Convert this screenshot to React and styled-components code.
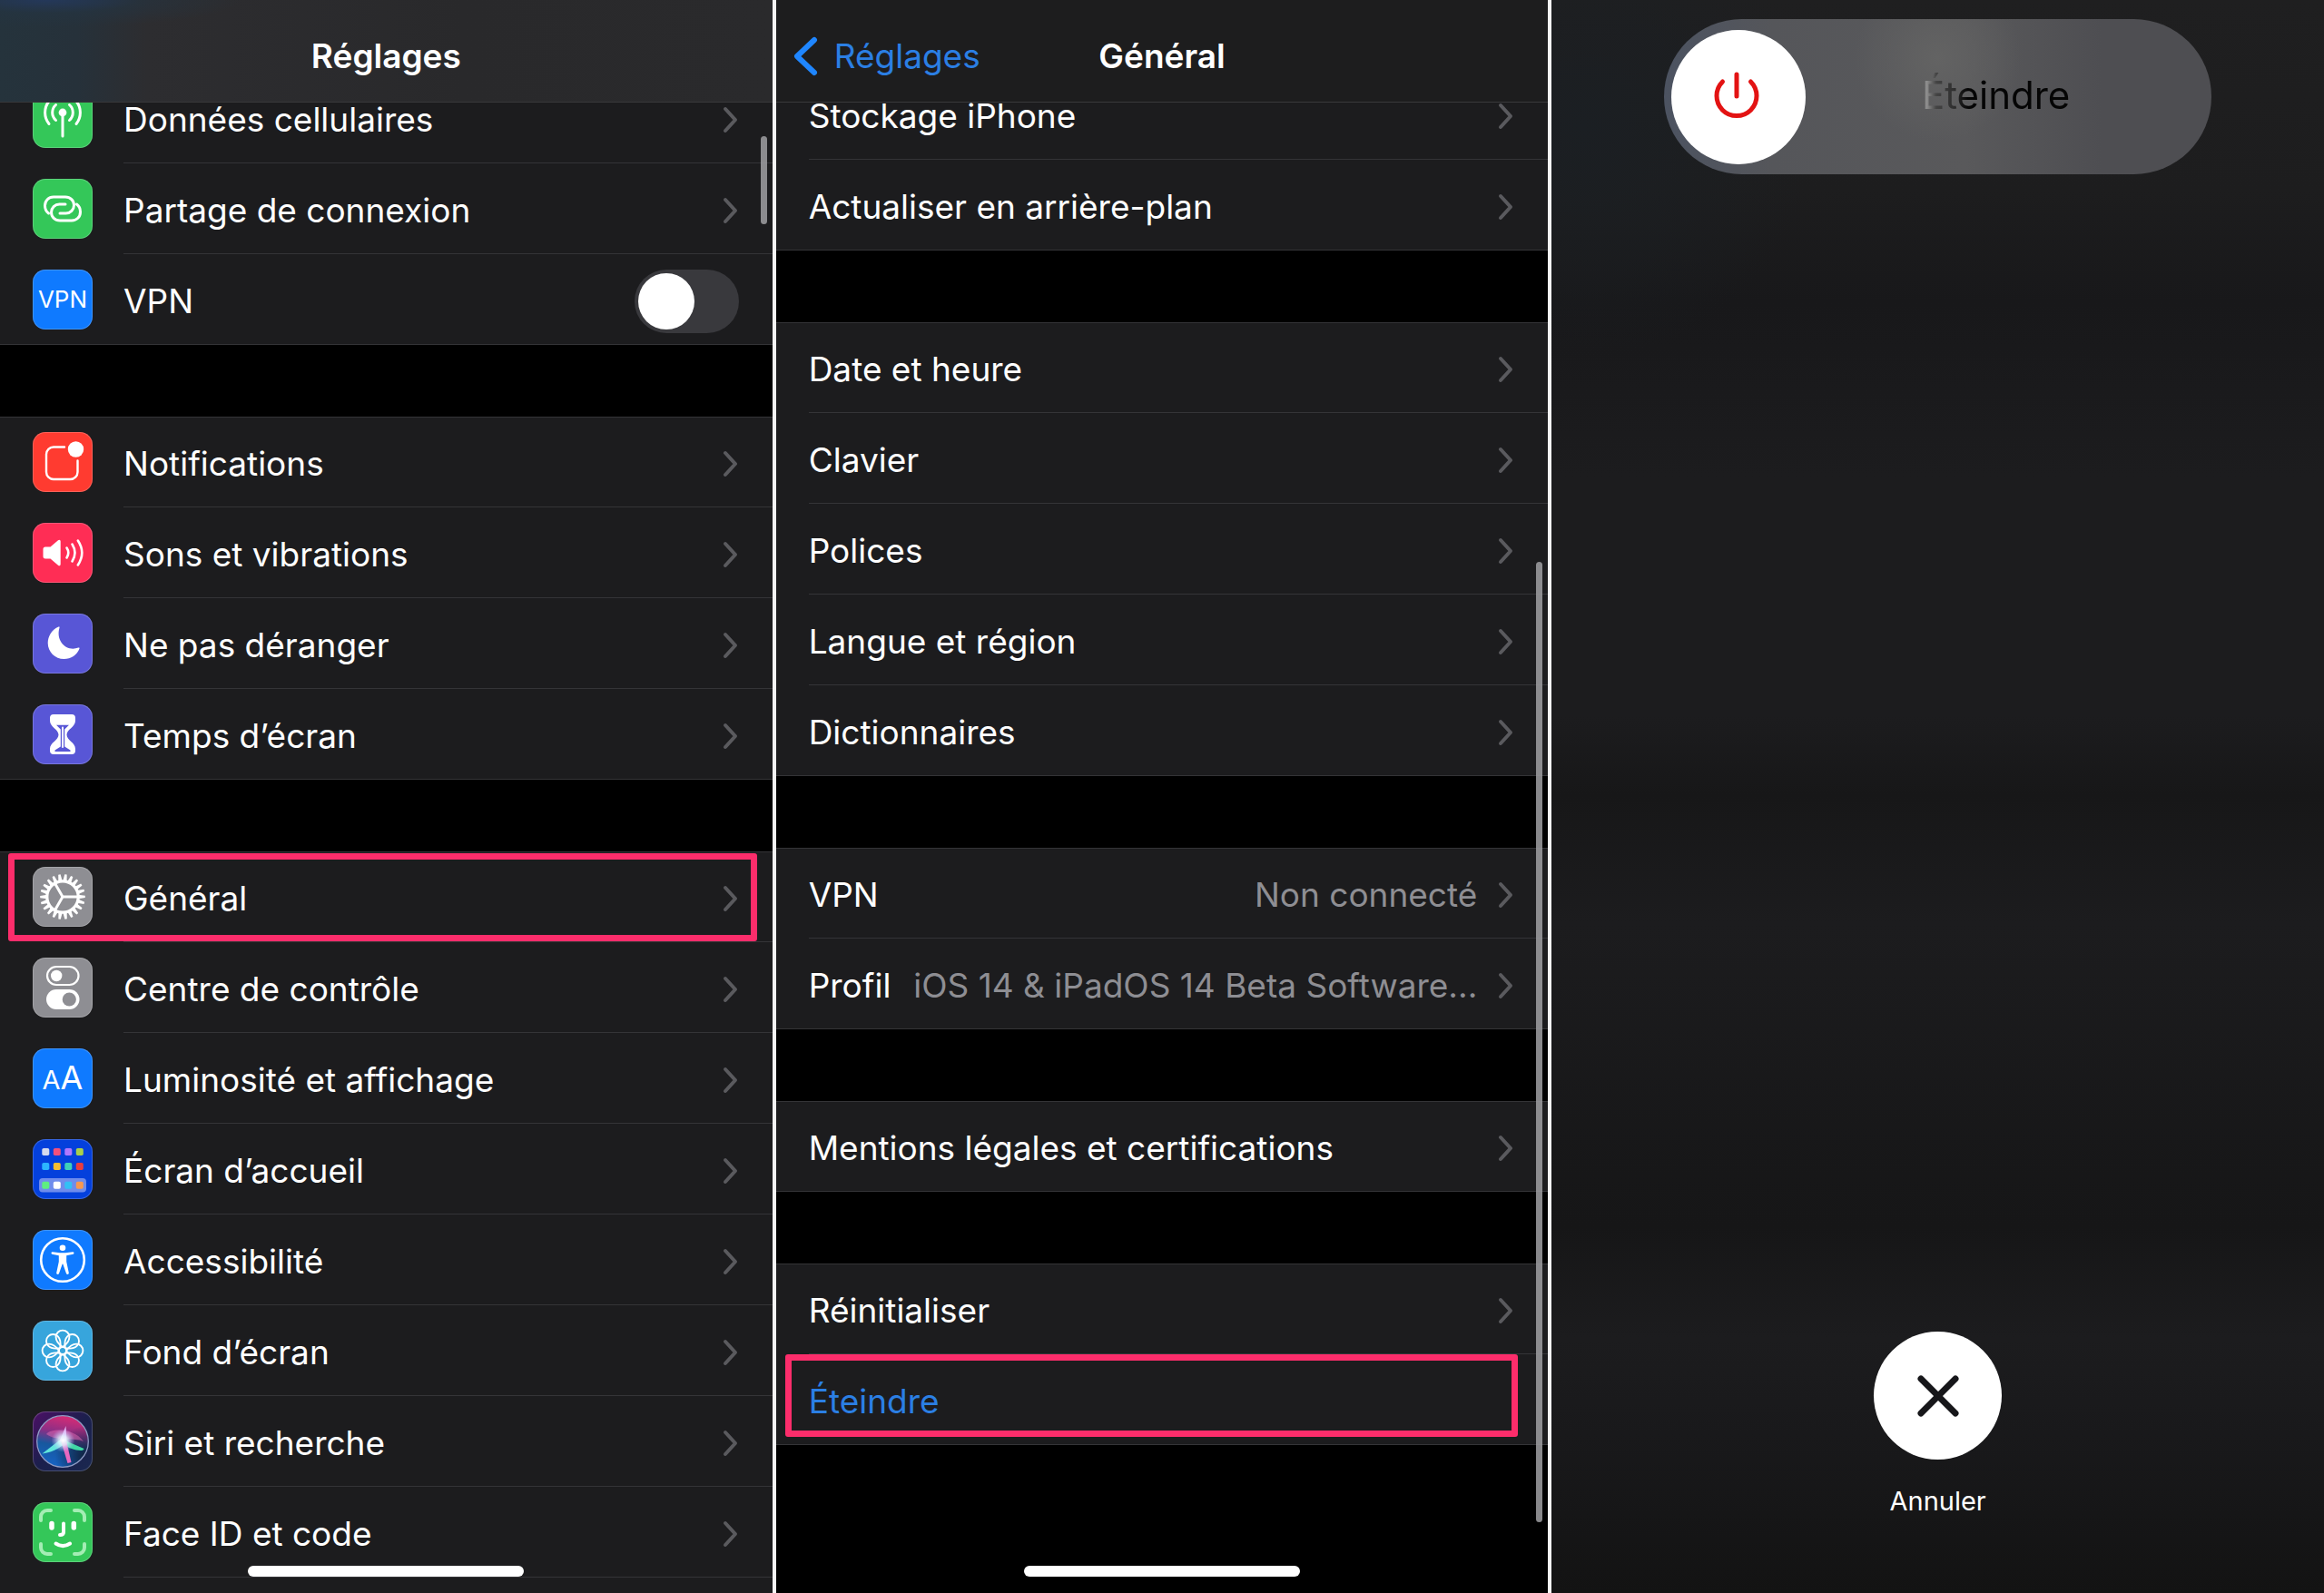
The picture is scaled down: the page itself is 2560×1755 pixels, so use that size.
import React from "react";
import styled, { createGlobalStyle, css } from "styled-components";

const GlobalStyle = createGlobalStyle`
  * {
    box-sizing: border-box;
  }
  body {
    margin: 0;
    background: #000000;
    font-family: Inter, "Liberation Sans", sans-serif;
  }
`;

const TEETH = Array.from({ length: 22 }, (_, i) => (i * 360) / 22 + 8);
const PETALS = [0, 45, 90, 135, 180, 225, 270, 315];
const HOME_APPS = [
  ["#d5d9ee", "#f4507c", "#b078ff", "#a8d04a"],
  ["#2cb5ff", "#f8bd30", "#3fd0b8", "#e83c40"],
  ["#5eee80", "#ffffff", "#32c0f5", "#f89850"]
];

function CellularIcon() {
  return (
    <Glyph viewBox="0 0 66 66">
      <circle cx="33" cy="27" r="4.4" fill="#fff" stroke="none" />
      <path d="M33 28V53" strokeWidth="3" />
      <path d="M25.5 35.5A11.4 11.4 0 0 1 25.5 18.5M40.5 35.5A11.4 11.4 0 0 0 40.5 18.5" strokeWidth="3" />
      <path d="M18 39.5A20 20 0 0 1 18 14.5M48 39.5A20 20 0 0 0 48 14.5" strokeWidth="3" />
    </Glyph>
  );
}

function HotspotIcon() {
  const link =
    "M17.5 38C14.8 36 13.5 33 13.5 29.5C13.5 24 17.5 20 23 20H36C41.5 20 45.5 24 45.5 29C45.5 34 41.5 38 36.5 38H30";
  return (
    <Glyph viewBox="0 0 66 66">
      <path d={link} strokeWidth="3" />
      <path d={link} strokeWidth="3" transform="rotate(180 33 33)" />
    </Glyph>
  );
}

function VpnIcon() {
  return <VpnMark>VPN</VpnMark>;
}

function NotificationsIcon() {
  return (
    <Glyph viewBox="0 0 66 66">
      <path d="M35 16.5H23a8 8 0 0 0-8 8V44a8 8 0 0 0 8 8h18.5a8 8 0 0 0 8-8V31.5" strokeWidth="2.4" />
      <circle cx="47.5" cy="19" r="8.7" fill="#fff" stroke="none" />
    </Glyph>
  );
}

function SoundIcon() {
  return (
    <Glyph viewBox="0 0 66 66">
      <path
        d="M14 26.5h5.5l8.5-7.2c1.4-1.2 2.7-.4 2.7 1.2v25c0 1.6-1.3 2.4-2.7 1.2L19.5 39.5H14a2.5 2.5 0 0 1-2.5-2.5v-8a2.5 2.5 0 0 1 2.5-2.5z"
        fill="#fff"
        stroke="none"
      />
      <path d="M37.5 27.5q3.6 5.5 0 11M43.5 23.5q6 9.5 0 19M49.8 19.5q9 13.5 0 27" strokeWidth="2.6" />
    </Glyph>
  );
}

function MoonIcon() {
  return (
    <Glyph viewBox="0 0 66 66">
      <path
        d="M29.5 15.5C30 14.6 29 14.3 28 14.8C21 18 16.7 25 16.7 32.5C16.7 42.3 24.7 50 34.5 50C42 50 49 45.5 51.5 38.5C51.8 37.5 51 37.3 50.3 37.6C38 42.5 25 31 29.5 15.5z"
        fill="#fff"
        stroke="none"
      />
    </Glyph>
  );
}

function HourglassIcon() {
  return (
    <Glyph viewBox="0 0 66 66">
      <path
        d="M23 11h20a4 4 0 0 1 4 4v3c0 7-9.5 9.5-9.5 15.5S47 42 47 49v2a4 4 0 0 1-4 4H23a4 4 0 0 1-4-4v-2c0-7 9.5-9.5 9.5-15.5S19 25 19 18v-3a4 4 0 0 1 4-4z"
        fill="#fff"
        stroke="none"
      />
      <path d="M26 22.8h14l-4.8 4.7v19l6.3 4v1.5h-17v-1.5l6.3-4v-19z" fill="#5856d6" stroke="none" />
      <path d="M33 25.5V47" strokeWidth="2" />
    </Glyph>
  );
}

function GearIcon() {
  return (
    <Glyph viewBox="0 0 66 66">
      {TEETH.map((angle) => (
        <path
          key={angle}
          d="M30.8 16L31.8 8.2H34.2L35.2 16z"
          fill="#fff"
          stroke="none"
          transform={`rotate(${angle} 33 33)`}
        />
      ))}
      <circle cx="33" cy="33" r="17.2" strokeWidth="3.2" />
      <path d="M33 33H50M33 33L24.5 18.3M33 33L24.5 47.7" strokeWidth="3" />
    </Glyph>
  );
}

function ControlCenterIcon() {
  return (
    <Glyph viewBox="0 0 66 66">
      <rect x="16" y="10" width="34.5" height="20" rx="10" strokeWidth="2.2" />
      <circle cx="26.2" cy="20" r="6.2" fill="#fff" stroke="none" />
      <rect x="15" y="35" width="36.5" height="22" rx="11" fill="#fff" stroke="none" />
      <circle cx="40.3" cy="46" r="7.6" fill="#8e8e93" stroke="none" />
    </Glyph>
  );
}

function DisplayIcon() {
  return (
    <DisplayMark>
      <small>A</small>A
    </DisplayMark>
  );
}

function HomeScreenIcon() {
  return (
    <Glyph viewBox="0 0 66 66">
      <rect x="7" y="43" width="52" height="15.5" rx="4" fill="#6f8cec" stroke="none" />
      {HOME_APPS.map((apps, row) =>
        apps.map((color, col) => (
          <rect
            key={color}
            x={10.3 + col * 12.5}
            y={[10, 26, 46.7][row]}
            width="8"
            height="8"
            rx="1.8"
            fill={color}
            stroke="none"
          />
        ))
      )}
    </Glyph>
  );
}

function AccessibilityIcon() {
  return (
    <Glyph viewBox="0 0 66 66">
      <circle cx="33" cy="33" r="23.8" strokeWidth="2.6" />
      <circle cx="33" cy="19.8" r="3.3" fill="#fff" stroke="none" />
      <path
        d="M22 24.2L30 25.3H36L44 24.2C45.8 24 46 26.3 44.5 26.7L37.2 28.3V35L39.8 47.3C40 49.2 37.6 49.5 37 48L33.3 37.5H32.7L29 48C28.4 49.5 26 49.2 26.2 47.3L28.8 35V28.3L21.5 26.7C20 26.3 20.2 24 22 24.2z"
        fill="#fff"
        stroke="none"
      />
    </Glyph>
  );
}

function FlowerIcon() {
  return (
    <Glyph viewBox="0 0 66 66">
      {PETALS.map((angle) => (
        <path
          key={angle}
          d="M33 29C28 25.5 25.6 22 25.6 18A7.4 7.4 0 0 1 40.4 18C40.4 22 38 25.5 33 29z"
          strokeWidth="1.9"
          transform={`rotate(${angle} 33 33)`}
        />
      ))}
      <circle cx="33" cy="33" r="4" strokeWidth="1.9" />
    </Glyph>
  );
}

function SiriIcon() {
  return (
    <Glyph viewBox="0 0 66 66">
      <defs>
        <linearGradient id="siriBall" x1="0.6" y1="0" x2="0.4" y2="1">
          <stop offset="0" stopColor="#d92b74" />
          <stop offset="0.35" stopColor="#8a2f86" />
          <stop offset="0.6" stopColor="#17589e" />
          <stop offset="1" stopColor="#1763c4" />
        </linearGradient>
        <radialGradient id="siriShade" cx="0.95" cy="0.8" r="0.6">
          <stop offset="0" stopColor="#10203c" />
          <stop offset="1" stopColor="#10203c" stopOpacity="0" />
        </radialGradient>
        <radialGradient id="siriGlow">
          <stop offset="0" stopColor="#ffffff" />
          <stop offset="0.4" stopColor="#e2f4ff" stopOpacity="0.8" />
          <stop offset="1" stopColor="#b9b4ff" stopOpacity="0" />
        </radialGradient>
      </defs>
      <circle cx="33" cy="33" r="28.3" fill="url(#siriBall)" stroke="none" />
      <circle cx="33" cy="33" r="28.3" fill="url(#siriShade)" stroke="#8f9bc4" strokeWidth="1.3" />
      <path d="M15 25C20 18 46 18 56 33C46 28 28 34 15 25z" fill="#e56bb4" fillOpacity="0.5" stroke="none" />
      <path d="M33 29L10.5 46.5C18 46 30 41 37 34z" fill="#5fe6dc" stroke="none" />
      <path d="M31 30L56.5 41C56 46 40 41 31 35z" fill="#3fd9a4" stroke="none" />
      <path d="M31 32L38.5 57L42.5 56L37 32z" fill="#e868c0" stroke="none" />
      <path d="M29.5 33L36.5 16L37.5 33z" fill="#e9b6f2" stroke="none" />
      <circle cx="33.5" cy="32" r="13" fill="url(#siriGlow)" stroke="none" />
    </Glyph>
  );
}

function FaceIdIcon() {
  return (
    <Glyph viewBox="0 0 66 66">
      <path
        d="M9 20V16a7 7 0 0 1 7-7h4M46 9h4a7 7 0 0 1 7 7v4M57 46v4a7 7 0 0 1-7 7h-4M20 57h-4a7 7 0 0 1-7-7v-4"
        stroke="#a4edb4"
        strokeWidth="4"
      />
      <path d="M21 23.5v4.5M45.3 23.5v4.5" strokeWidth="5.5" />
      <path d="M34 23.5v9.5q0 3-4 3M25.5 45.5q7.8 5.2 15.6 0" strokeWidth="4" />
    </Glyph>
  );
}

function Chevron() {
  return (
    <ChevronMark viewBox="0 0 18 30" aria-hidden="true">
      <path d="M3 3L14 15L3 27" />
    </ChevronMark>
  );
}

const SETTINGS = [
  [
    { label: "Données cellulaires", tint: "#34c759", icon: <CellularIcon /> },
    { label: "Partage de connexion", tint: "#34c759", icon: <HotspotIcon /> },
    { label: "VPN", tint: "#0f7aff", icon: <VpnIcon />, toggle: true }
  ],
  [
    { label: "Notifications", tint: "#ff3b30", icon: <NotificationsIcon /> },
    { label: "Sons et vibrations", tint: "#ff2d55", icon: <SoundIcon /> },
    { label: "Ne pas déranger", tint: "#5856d6", icon: <MoonIcon /> },
    { label: "Temps d’écran", tint: "#5856d6", icon: <HourglassIcon /> }
  ],
  [
    { label: "Général", tint: "#8e8e93", icon: <GearIcon />, marked: true },
    { label: "Centre de contrôle", tint: "#8e8e93", icon: <ControlCenterIcon /> },
    { label: "Luminosité et affichage", tint: "#0f7aff", icon: <DisplayIcon /> },
    { label: "Écran d’accueil", tint: "#0440dc", icon: <HomeScreenIcon /> },
    { label: "Accessibilité", tint: "#0f7aff", icon: <AccessibilityIcon /> },
    { label: "Fond d’écran", tint: "#37a5dc", icon: <FlowerIcon /> },
    { label: "Siri et recherche", tint: "linear-gradient(135deg, #4c0f66, #1b1f4c 50%, #1a2850)", icon: <SiriIcon /> },
    { label: "Face ID et code", tint: "#34c759", icon: <FaceIdIcon /> },
    { label: "", tint: "#ff3b30" }
  ]
];

const GENERAL = [
  [{ label: "Stockage iPhone" }, { label: "Actualiser en arrière-plan" }],
  [
    { label: "Date et heure" },
    { label: "Clavier" },
    { label: "Polices" },
    { label: "Langue et région" },
    { label: "Dictionnaires" }
  ],
  [
    { label: "VPN", value: "Non connecté" },
    { label: "Profil", value: "iOS 14 & iPadOS 14 Beta Software..." }
  ],
  [{ label: "Mentions légales et certifications" }],
  [{ label: "Réinitialiser" }, { label: "Éteindre", action: true }]
];

function SettingRow({ item }) {
  const content = (
    <>
      <Label>{item.label}</Label>
      {item.value && <Value>{item.value}</Value>}
      {item.toggle && <Toggle type="checkbox" role="switch" />}
      {!item.toggle && !item.action && <Chevron />}
    </>
  );

  return (
    <Row>
      {item.tint && <Tile $tint={item.tint}>{item.icon}</Tile>}
      {item.toggle && <RowLabel>{content}</RowLabel>}
      {item.action && <RowButton type="button">{content}</RowButton>}
      {!item.toggle && !item.action && <RowLink href="#">{content}</RowLink>}
      {item.marked && <Marker $inset="2px 17px 1px 9px" />}
      {item.action && <Marker $inset="0 33px 9px 10px" />}
    </Row>
  );
}

function SettingList({ groups, scrolled }) {
  return (
    <List $scrolled={scrolled}>
      {groups.map((items, index) => (
        <Group key={index}>
          {items.map((item) => (
            <SettingRow key={item.label} item={item} />
          ))}
        </Group>
      ))}
    </List>
  );
}

function App() {
  return (
    <Screens>
      <GlobalStyle />
      <Screen>
        <NavBar $glow>
          <Title>Réglages</Title>
        </NavBar>
        <SettingList groups={SETTINGS} scrolled={33} />
        <ScrollThumb $top={150} $length={97} />
        <HomeIndicator />
      </Screen>
      <Screen>
        <NavBar>
          <BackLink href="#">
            <svg viewBox="0 0 28 44" aria-hidden="true">
              <path d="M24 4L5 22L24 40" />
            </svg>
            Réglages
          </BackLink>
          <Title>Général</Title>
        </NavBar>
        <SettingList groups={GENERAL} scrolled={37} />
        <ScrollThumb $top={619} $length={1058} />
        <HomeIndicator />
      </Screen>
      <PowerScreen>
        <PowerSlider>
          <input type="range" min="0" max="100" defaultValue="0" aria-label="Éteindre" />
          <PowerIcon viewBox="0 0 52 52" aria-hidden="true">
            <path d="M26 3V27M10.5 11A22 22 0 1 0 41.5 11" />
          </PowerIcon>
          <PowerText>Éteindre</PowerText>
        </PowerSlider>
        <Cancel>
          <CancelButton type="button" aria-labelledby="cancel-label">
            <svg viewBox="0 0 48 48" aria-hidden="true">
              <path d="M5 5L43 43M43 5L5 43" />
            </svg>
          </CancelButton>
          <span id="cancel-label">Annuler</span>
        </Cancel>
      </PowerScreen>
    </Screens>
  );
}

const Screens = styled.main`
  display: grid;
  grid-template-columns: repeat(3, minmax(0, 1fr));
  gap: 4px;
  height: 100vh;
  overflow: hidden;
  background-color: #f4f4f4;
`;

const Screen = styled.section`
  position: relative;
  display: flex;
  flex-direction: column;
  overflow: hidden;
  background-color: #000000;
  color: #ffffff;
  font-size: 37px;
  line-height: 48px;
`;

const NavBar = styled.header`
  position: relative;
  z-index: 1;
  flex: none;
  display: grid;
  grid-template-columns: 1fr auto 1fr;
  align-items: center;
  height: 113px;
  padding: 12px 18px 0;
  border-bottom: 1px solid #38383a;
  background-color: #1d1d1e;
  ${(props) =>
    props.$glow &&
    css`
      background: radial-gradient(ellipse at 6% 0, #24385a, rgba(36, 52, 66, 0.6) 9%, transparent 19%),
        linear-gradient(90deg, #25333c, #26313a 10%, #2d2d30 19%, #29292b 60%, #2a2a2c);
    `}
`;

const Title = styled.h1`
  grid-column: 2;
  margin: 0;
  font-size: 37px;
  font-weight: 600;
`;

const BackLink = styled.a`
  display: flex;
  align-items: center;
  gap: 18px;
  grid-row: 1;
  color: #2b7fe4;
  text-decoration: none;

  svg {
    width: 28px;
    height: 44px;
    fill: none;
    stroke: #1f86ff;
    stroke-width: 6;
    stroke-linecap: round;
    stroke-linejoin: round;
  }
`;

const List = styled.div`
  display: flex;
  flex-direction: column;
  gap: 79px;
  margin-top: -${(props) => props.$scrolled}px;
`;

const Group = styled.ul`
  margin: 0;
  padding: 0;
  list-style: none;
  background-color: #1c1c1e;
  box-shadow: inset 0 1px #343437, inset 0 -1px #343437;
`;

const Row = styled.li`
  position: relative;
  display: flex;
  align-items: center;
  gap: 34px;
  height: 100px;
  padding-left: 36px;
`;

const rowContent = css`
  flex: 1;
  display: flex;
  align-items: center;
  gap: 23px;
  min-width: 0;
  height: 100px;
  padding: 4px 37px 0 0;
  border: none;
  border-bottom: 1px solid #343437;
  background: transparent;
  color: #ffffff;
  font: inherit;
  text-align: left;
  text-decoration: none;
  white-space: nowrap;
`;

const RowLink = styled.a`
  ${rowContent}
`;

const RowLabel = styled.label`
  ${rowContent}
`;

const RowButton = styled.button`
  ${rowContent}
  color: #2b7fe4;
`;

const Label = styled.span`
  flex: none;
  margin-right: auto;
`;

const Value = styled.span`
  color: #8e8e93;
`;

const ChevronMark = styled.svg`
  flex: none;
  width: 18px;
  height: 30px;
  fill: none;
  stroke: #5a5a5e;
  stroke-width: 4;
  stroke-linecap: round;
  stroke-linejoin: round;
`;

const Toggle = styled.input`
  appearance: none;
  flex: none;
  width: 115px;
  height: 70px;
  margin: 0;
  padding: 4px;
  border-radius: 35px;
  background-color: #39393d;

  &::before {
    content: "";
    display: block;
    width: 62px;
    height: 62px;
    border-radius: 50%;
    background-color: #ffffff;
  }

  &:checked {
    background-color: #34c759;
  }

  &:checked::before {
    margin-left: auto;
  }
`;

const Tile = styled.span`
  flex: none;
  display: flex;
  align-items: center;
  justify-content: center;
  width: 66px;
  height: 66px;
  border-radius: 14px;
  background: ${(props) => props.$tint};
  box-shadow: inset 0 0 0 1px rgba(255, 255, 255, 0.2);
`;

const Glyph = styled.svg`
  width: 66px;
  height: 66px;
  fill: none;
  stroke: #ffffff;
  stroke-linecap: round;
  stroke-linejoin: round;
`;

const VpnMark = styled.span`
  font-size: 26px;
`;

const DisplayMark = styled.span`
  font-size: 36px;

  small {
    font-size: 29px;
  }
`;

const Marker = styled.span`
  position: absolute;
  inset: ${(props) => props.$inset};
  border: 7px solid #fc2d6b;
  border-radius: 3px;
  pointer-events: none;
`;

const ScrollThumb = styled.span`
  position: absolute;
  top: ${(props) => props.$top}px;
  right: 6px;
  width: 7px;
  height: ${(props) => props.$length}px;
  border-radius: 4px;
  background-color: rgba(160, 160, 163, 0.85);
`;

const HomeIndicator = styled.span`
  position: absolute;
  left: 50%;
  bottom: 18px;
  width: 304px;
  height: 12px;
  margin-left: -152px;
  border-radius: 6px;
  background-color: #ffffff;
`;

const PowerScreen = styled.section`
  display: flex;
  flex-direction: column;
  align-items: center;
  justify-content: space-between;
  padding: 21px 124px 83px;
  background: radial-gradient(circle at 4% 8%, #1b1f23, rgba(27, 31, 35, 0) 14%),
    linear-gradient(#1f1f20, #1d1d1e 12%, #18181a 19%, #1c1c1e 30%, #1c1c1e 45%, #171718 50%, #1c1c1e 58%,
      #161617 77%, #1c1c1e 84%, #19191b 90%, #131313);
`;

const PowerSlider = styled.div`
  position: relative;
  display: flex;
  align-items: center;
  width: 100%;
  height: 171px;
  padding-bottom: 4px;
  border-radius: 86px;
  background: radial-gradient(circle at 50% 25%, #636363, rgba(88, 88, 90, 0) 28%),
    linear-gradient(90deg, #4c5361, #55565a 20%, #59595b 55%, #4e4e52 80%);

  input {
    appearance: none;
    position: absolute;
    inset: 0;
    width: 100%;
    margin: 0;
    padding: 0 8px;
    background: transparent;
  }

  input::-webkit-slider-thumb {
    appearance: none;
    width: 148px;
    height: 148px;
    border-radius: 50%;
    background-color: #ffffff;
  }
`;

const PowerIcon = styled.svg`
  position: relative;
  flex: none;
  width: 52px;
  height: 52px;
  margin-left: 54px;
  fill: none;
  stroke: #e31313;
  stroke-width: 5;
  stroke-linecap: round;
  pointer-events: none;
`;

const PowerText = styled.span`
  position: relative;
  flex: 1;
  display: flex;
  justify-content: center;
  padding-left: 22px;
  font-size: 42px;
  line-height: 56px;
  color: transparent;
  background: linear-gradient(90deg, #8c8c8c 37%, #444444 39%, #2e2e2e 43%, #050505 46%);
  background-clip: text;
  pointer-events: none;
`;

const Cancel = styled.div`
  display: flex;
  flex-direction: column;
  align-items: center;
  gap: 28px;
  color: #ffffff;
  font-size: 29px;
  line-height: 36px;
`;

const CancelButton = styled.button`
  display: flex;
  align-items: center;
  justify-content: center;
  width: 141px;
  height: 141px;
  padding: 0;
  border: none;
  border-radius: 50%;
  background-color: #ffffff;

  svg {
    width: 48px;
    height: 48px;
    fill: none;
    stroke: #17171a;
    stroke-width: 7;
    stroke-linecap: round;
  }
`;

export default App;
